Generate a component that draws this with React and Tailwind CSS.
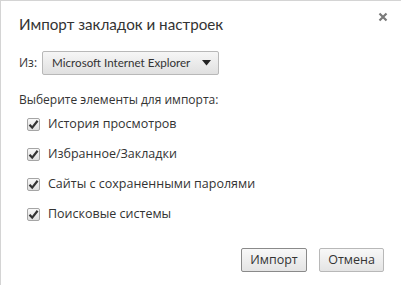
import React, { useState } from "react";

const items = ["История просмотров", "Избранное/Закладки", "Сайты с сохраненными паролями", "Поисковые системы"];

const Check = ({ checked, onClick }) => (
    <button
        type="button"
        onClick={onClick}
        className="w-[13px] h-[13px] border border-[#a5a5a5] rounded-[2px] bg-gradient-to-b from-[#f8f8f8] to-[#dedede] flex items-center justify-center p-0"
    >
        {checked && (
            <svg width="11" height="11" viewBox="0 0 11 11">
                <path d="M1.5 5.8 L4.2 8.6 L9.6 1.8" fill="none" stroke="#333" strokeWidth="2.2" />
            </svg>
        )}
    </button>
);

const App = () => {
    const [checked, setChecked] = useState([true, true, true, true]);

    const toggle = (i) => {
        const next = [...checked];
        next[i] = !next[i];
        setChecked(next);
    };

    return (
        <div className="w-[401px] h-[285px] bg-white border-l border-t border-[#d4d4d4] relative text-[#333] font-['Open_Sans',sans-serif] text-[12px]">
            <button className="absolute right-[13px] top-[11px] text-[#777] p-0">
                <svg width="10" height="10" viewBox="0 0 10 10">
                    <path d="M1.5 1.5 L8.5 8.5 M8.5 1.5 L1.5 8.5" stroke="#7a7a7a" strokeWidth="2.2" />
                </svg>
            </button>

            <div className="flex flex-col pl-[18px] pr-[17px]">
                <div className="pt-[11px] text-[15.2px] leading-[24px] text-[#333] font-['Lato',sans-serif]">Импорт закладок и настроек</div>

                <div className="flex items-center gap-[5px] mt-[15px]">
                    <span>Из:</span>
                    <div className="shrink-0 w-[177px] h-[24px] border border-[#b8b8b8] rounded-[2px] bg-gradient-to-b from-[#f6f6f6] to-[#e0e0e0] flex items-center justify-between pl-[9px] pr-[7px]">
                        <span className="text-[11.6px] font-['Lato',sans-serif] whitespace-nowrap">Microsoft Internet Explorer</span>
                        <svg width="9" height="6" viewBox="0 0 9 6">
                            <path d="M0 0 H9 L4.5 5.5 Z" fill="#222" />
                        </svg>
                    </div>
                </div>

                <div className="mt-[16px] leading-[18px]">Выберите элементы для импорта:</div>

                <div className="flex flex-col pl-[8px]">
                    {items.map((label, i) => (
                        <div key={label} className="flex items-center gap-[8px] h-[30px]">
                            <Check checked={checked[i]} onClick={() => toggle(i)} />
                            <span className="text-[12.5px]">{label}</span>
                        </div>
                    ))}
                </div>

                <div className="flex justify-end gap-[12px] mt-[19px]">
                    <button className="w-[66px] h-[24px] border border-[#8a8a8a] rounded-[2px] bg-gradient-to-b from-[#f8f8f8] to-[#e4e4e4] text-[12.5px] text-[#333]">
                        Импорт
                    </button>
                    <button className="w-[65px] h-[24px] border border-[#b8b8b8] rounded-[2px] bg-gradient-to-b from-[#f8f8f8] to-[#e4e4e4] text-[12.5px] text-[#333]">
                        Отмена
                    </button>
                </div>
            </div>
        </div>
    );
};

export default App;
